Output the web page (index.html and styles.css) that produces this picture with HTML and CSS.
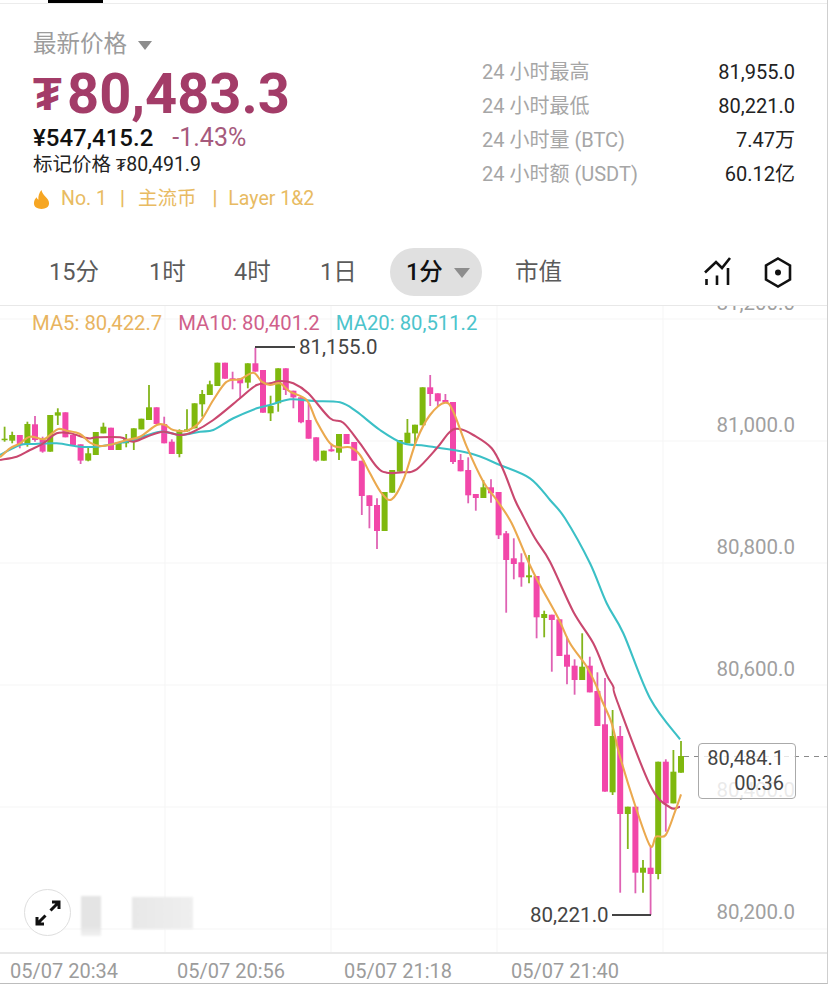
FILE: index.html
```html
<!DOCTYPE html>
<html lang="zh-CN">
<head>
<meta charset="utf-8">
<title>BTC 行情</title>
<link rel="stylesheet" href="styles.css">
</head>
<body>
<main class="page">
  <div class="topbar"><span class="topbar-active"></span></div>
  <section class="summary">
    <div class="quote">
      <div class="quote-title">最新价格<span class="caret caret-title"></span></div>
      <div class="price"><span class="price-sym">₮</span>80,483.3</div>
      <div class="sub"><span class="sub-cny">¥547,415.2</span><span class="sub-change">-1.43%</span></div>
      <div class="mark">标记价格 <span class="mark-sym">₮</span>80,491.9</div>
      <div class="tags">
        <svg class="flame" viewBox="0 0 18 22" width="17" height="21"><path d="M9 1c.6 3.2 2 4.600 4 6.800 2 2.100 4 4.200 4 7.200 0 3.900-3.400 6-8 6s-8-2.100-8-6c0-2.700 1.300-4.600 2.800-6.300.4 1.200 1 2 1.900 2.500C5.300 7.600 6.600 3.600 9 1z"/></svg>
        <span class="tag-first">No. 1</span><span class="tag-sep">|</span><span>主流币</span><span class="tag-sep tag-sep-wide">|</span><span>Layer 1&amp;2</span>
      </div>
    </div>
    <dl class="stats">
      <div class="stat"><dt>24 小时最高</dt><dd>81,955.0</dd></div>
      <div class="stat"><dt>24 小时最低</dt><dd>80,221.0</dd></div>
      <div class="stat"><dt>24 小时量 (BTC)</dt><dd>7.47万</dd></div>
      <div class="stat"><dt>24 小时额 (USDT)</dt><dd>60.12亿</dd></div>
    </dl>
  </section>
  <nav class="tabs">
    <span class="tab tab-15">15分</span>
    <span class="tab tab-1h">1时</span>
    <span class="tab tab-4h">4时</span>
    <span class="tab tab-1d">1日</span>
    <span class="tab-pill">1分<span class="caret caret-pill"></span></span>
    <span class="tab tab-cap">市值</span>
    <span class="tab-icons">
      <svg class="icon" viewBox="0 0 30 30" width="30" height="30"><path d="M2 15.500 13 5l6 6 8-10M3.500 22v6M14 18.500V28M25 11v17"/></svg>
      <svg class="icon" viewBox="0 0 30 32" width="30" height="32"><path d="M15 2.500l12 7v14l-12 7-12-7v-14z"/><circle class="icon-dot" cx="15" cy="16.500" r="3"/></svg>
    </span>
  </nav>
  <section class="chart">
    <svg id="plot" class="plot" viewBox="0 306 828 646" width="828" height="646">
      <g class="grid">
        <path d="M0 319H828M0 441H828M0 563H828M0 685H828M0 807H828M0 929H828"/>
        <path d="M165 306V952M331 306V952M497 306V952M663 306V952"/>
      </g>
      <g class="axis-labels">
        <text x="795" y="310">81,200.0</text>
        <text x="795" y="432">81,000.0</text>
        <text x="795" y="554">80,800.0</text>
        <text x="795" y="676">80,600.0</text>
        <text x="795" y="797">80,400.0</text>
        <text x="795" y="919">80,200.0</text>
      </g>
      <g id="candles"></g>
      <g id="averages"></g>
      <path class="marker-line" d="M255 347H295M612 915H651"/>
      <text class="marker-text" x="299" y="354">81,155.0</text>
      <text class="marker-text" x="530" y="922">80,221.0</text>
      <path class="last-line" d="M684 756.500H828"/>
    </svg>
    <div class="legend">
      <span class="ma5">MA5: 80,422.7</span>
      <span class="ma10">MA10: 80,401.2</span>
      <span class="ma20">MA20: 80,511.2</span>
    </div>
    <div class="last-box"><span>80,484.1</span><span>00:36</span></div>
    <div class="expand">
      <svg viewBox="0 0 28 28" width="28" height="28"><path d="M16.500 11.500L25 3M18 3h7v7M11.500 16.500L3 25M3 18v7h7"/></svg>
    </div>
    <div class="smudge smudge-a"></div>
    <div class="smudge smudge-b"></div>
  </section>
  <footer class="times">
    <span>05/07 20:34</span><span>05/07 20:56</span><span>05/07 21:18</span><span>05/07 21:40</span>
  </footer>
</main>
<script src="chart.js"></script>
</body>
</html>
```
FILE: styles.css
```css
* { box-sizing: border-box; margin: 0; padding: 0; }
html, body { background: #fff; }
body {
  font-family: Roboto, "Noto Sans CJK SC", sans-serif;
  color: #222;
}
.page {
  width: 828px;
  height: 984px;
  display: flex;
  flex-direction: column;
  overflow: hidden;
  border-right: 1px solid #cfcfcf;
  border-bottom: 1px solid #bdbdbd;
}
.topbar {
  height: 4px;
  flex: none;
  border-bottom: 1px solid #ececec;
  padding-left: 48px;
}
.topbar-active { display: block; width: 55px; height: 3px; background: #000; }

.summary {
  flex: none;
  height: 236px;
  padding: 24px 32px 0 33px;
  display: flex;
  justify-content: space-between;
}
.quote { width: 330px; }
.quote-title {
  font-size: 23.500px;
  line-height: 32px;
  color: #9c9c9c;
  display: flex;
  align-items: center;
}
.caret {
  display: block;
  width: 0;
  height: 0;
  border-left: 7px solid transparent;
  border-right: 7px solid transparent;
  border-top: 9px solid #8d8d8d;
}
.caret-title { margin-left: 11px; margin-top: 2px; }
.price {
  font-size: 56px;
  font-weight: 700;
  line-height: 58px;
  margin-top: 5px;
  color: #a33c68;
  display: flex;
  align-items: center;
}
.price-sym { font-size: 47px; width: 34px; }
.sub {
  display: flex;
  align-items: baseline;
  line-height: 29px;
}
.sub-cny { font-size: 24px; font-weight: 500; color: #111; }
.sub-change { font-size: 25px; margin-left: 19px; color: #a65a7c; }
.mark { font-size: 19.500px; line-height: 24px; color: #222; }
.mark-sym { font-size: 17px; }
.tags {
  margin-top: 9px;
  display: flex;
  align-items: center;
  font-size: 19.500px;
  line-height: 26px;
  color: #e8bb62;
}
.flame { fill: #f6a623; flex: none; margin-right: 11px; }
.tag-sep { margin: 0 13px; font-weight: 700; }
.tag-sep-wide { margin: 0 11px 0 16px; }

.stats { width: 313px; padding-top: 27px; }
.stat {
  display: flex;
  justify-content: space-between;
  font-size: 20px;
  line-height: 34px;
}
.stat dt { color: #a6a6a6; }
.stat dd { color: #222; }

.tabs {
  flex: none;
  height: 66px;
  border-bottom: 1px solid #e8e8e8;
  display: flex;
  align-items: flex-start;
  padding: 8px 34px 0 49px;
  font-size: 23.500px;
  line-height: 48px;
  color: #5b5b5b;
}
.tab { display: block; }
.tab-15 { width: 100px; }
.tab-1h { width: 85px; }
.tab-4h { width: 86px; }
.tab-1d { width: 70px; }
.tab-pill {
  width: 92px;
  height: 48px;
  padding-left: 16px;
  border-radius: 24px;
  background: #e0e0e0;
  color: #111;
  font-weight: 500;
  display: flex;
  align-items: center;
}
.caret-pill { margin-left: 11px; margin-top: 1px; border-left-width: 8px; border-right-width: 8px; border-top-width: 10px; }
.tab-cap { margin-left: 33px; }
.tab-icons {
  margin-left: auto;
  display: flex;
  gap: 30px;
  align-items: center;
  height: 48px;
}
.icon { fill: none; stroke: #111; stroke-width: 2.600; }
.icon-dot { fill: #111; stroke: none; }

.chart { flex: 1; position: relative; overflow: hidden; }
.plot { display: block; }
.grid path { fill: none; stroke: #f5f5f5; stroke-width: 1; }
.axis-labels text { font-size: 20.500px; fill: #a0a0a0; text-anchor: end; }
.marker-line { fill: none; stroke: #444; stroke-width: 1.800; }
.marker-text { font-size: 20.500px; fill: #444; }
.last-line { fill: none; stroke: #8a8a8a; stroke-width: 1; stroke-dasharray: 5 5; }

.legend {
  position: absolute;
  left: 32px;
  top: 6px;
  display: flex;
  gap: 16px;
  font-size: 20.300px;
  line-height: 22px;
}
.ma5 { color: #e8b45f; }
.ma10 { color: #d0608a; }
.ma20 { color: #4cc4cc; }

.last-box {
  position: absolute;
  left: 698px;
  top: 437px;
  width: 98px;
  height: 56px;
  border: 1px solid #aaa;
  border-radius: 4px;
  background: rgba(255, 255, 255, 0.78);
  padding: 0 11px 0 0;
  display: flex;
  flex-direction: column;
  align-items: flex-end;
  justify-content: center;
  font-size: 20px;
  line-height: 25px;
  color: #444;
}
.expand {
  position: absolute;
  left: 24px;
  top: 583px;
  width: 47px;
  height: 47px;
  border-radius: 50%;
  border: 1.500px solid #dedede;
  background: #fff;
  display: flex;
  align-items: center;
  justify-content: center;
}
.expand svg { fill: none; stroke: #111; stroke-width: 3; }
.smudge { position: absolute; filter: blur(1px); }
.smudge-a { left: 81px; top: 590px; width: 20px; height: 40px; background: linear-gradient(#e4e4e4 75%, #f2f2f2); }
.smudge-b { left: 132px; top: 591px; width: 61px; height: 32px; background: linear-gradient(90deg, #e8e8e8, #efefef); }

.times {
  flex: none;
  height: 31px;
  border-top: 2px solid #e8e8e8;
  display: grid;
  grid-template-columns: repeat(4, 167px);
  padding-left: 10px;
  font-size: 20px;
  line-height: 34px;
  color: #9c9c9c;
}
```
FILE: chart.js
```js
// Candles: [colour, body top, body bottom, wick top, wick bottom], read at 3x scale from y origin.
const candleSets = [
  { first: -1, y0: 300, rows: [
    ['g',430,452,430,455],['g',416,420,380,425],['g',405,422,395,430],['p',405,435,405,445],['g',372,435,365,440],
    ['p',373,420,348,425],['p',418,455,410,458],['g',345,455,345,455],['g',337,347,325,375],['p',337,412,337,412],
    ['p',405,435,405,435],['p',433,482,433,492],['g',460,482,440,484],['g',396,465,396,465],['g',380,400,368,400],
    ['p',383,450,383,450],['g',428,450,428,450],['g',417,430,402,442],['g',385,420,385,450],['g',356,388,356,388],
    ['g',322,360,255,360],['p',322,372,322,372],['p',372,430,350,430],['p',425,462,418,462],['g',390,462,388,472],
    ['g',388,394,328,395],['g',310,385,310,385],['g',282,313,270,350],['g',253,285,242,285],['g',188,258,188,258],
    ['p',188,236,188,236],['p',235,240,215,268],['p',235,250,235,295],['g',190,248,190,265],['p',190,215,143,215],
    ['p',210,338,210,338]
  ]},
  { first: 35, y0: 300, rows: [['g',318,340,287,363]] },
  { first: 36, y0: 340, rows: [
    ['g',85,190,85,215],['p',85,150,85,165],['p',152,172,152,205],['p',172,247,172,250],['p',240,296,190,296],
    ['p',292,362,292,365],['g',332,362,332,362],['p',328,334,315,335],['g',282,338,282,360],['p',282,312,282,312],
    ['p',306,362,306,362],['p',362,468,362,525],['p',466,498,466,565],['p',495,573,475,627],['g',456,573,456,573],
    ['g',390,458,390,458],['g',300,395,300,395],['g',278,310,237,310],['g',254,280,254,312],['g',142,256,142,256],
    ['p',142,162,105,198],['p',160,184,160,198],['p',180,188,162,188],['p',186,366,186,372],['p',360,394,342,394],
    ['p',390,466,352,490],['p',462,474,462,512],['g',442,474,420,474],['p',442,460,418,488],['p',456,586,456,597]
  ]},
  { first: 66, y0: 500, rows: [
    ['p',100,180,93,338],['p',175,192,115,238],['p',187,232,160,260],['g',226,232,165,250],['p',228,352,228,415],
    ['g',342,354,332,412],['p',344,360,344,515],['p',358,468,358,468],['p',464,500,410,553],['p',497,540,478,584],
    ['g',500,540,400,540],['p',497,577,470,577],['p',573,678,517,678]
  ]},
  { first: 79, y0: 700, rows: [
    ['p',73,275,-66,275],['g',108,277,30,285],['p',108,342,78,578],['g',320,342,320,447],['p',320,518,320,580],
    ['g',503,518,480,578],['p',503,522,440,645],['g',185,522,185,538],['p',185,310,178,395],['g',215,310,150,310],
    ['g',168,218,123,218]
  ]}
];

// Moving averages: [x origin, y origin, points read at 3x scale].
const averages = {
  ma5: [
    [0,300,[[0,472],[30,445],[60,430],[90,410],[130,418],[150,405],[175,387],[200,392],[240,402],[270,428],[300,438],[340,432],[380,420],[420,410],[470,375],[495,375],[520,390],[560,392],[600,365],[640,300],[680,245],[720,238],[760,218],[785,245]]],
    [270,340,[[0,135],[30,130],[60,155],[110,180],[140,245],[180,310],[210,322],[240,322],[270,345],[300,400],[335,460],[365,478],[400,420],[440,300],[480,225],[525,188],[550,215],[590,320],[640,425]]],
    [490,500,[[20,0],[65,70],[117,190],[150,255],[205,355],[240,430],[290,500],[320,560]]],
    [570,700,[[95,0],[125,70],[150,170],[195,315],[240,437],[258,410],[287,405],[315,335],[333,283]]]
  ],
  ma10: [
    [0,300,[[0,480],[50,470],[90,450],[130,430],[170,400],[210,400],[265,415],[290,412],[360,412],[400,425],[440,410],[490,395],[540,405],[580,395],[640,360],[720,295],[770,255]]],
    [270,340,[[0,130],[30,123],[70,130],[115,160],[180,235],[220,248],[270,310],[320,380],[350,398],[400,397],[440,388],[500,325],[540,275],[570,267],[610,285],[665,325],[700,390]]],
    [490,500,[[75,0],[95,40],[135,115],[180,185],[250,335],[310,430],[350,525],[370,560]]],
    [570,700,[[140,0],[240,255],[300,322],[330,320]]]
  ],
  ma20: [
    [0,300,[[0,465],[60,435],[100,432],[170,430],[240,440],[290,440],[340,432],[400,420],[480,395],[540,405],[600,395],[640,390],[700,355],[770,325]]],
    [270,340,[[0,195],[60,178],[130,183],[210,187],[260,215],[330,270],[400,310],[470,318],[600,340],[690,375],[780,415]]],
    [490,500,[[180,0],[225,55],[300,190],[350,310],[400,400],[480,595]]],
    [570,700,[[330,118]]]
  ]
};

const NS = 'http://www.w3.org/2000/svg';
const COLORS = {
  p: { body: '#f247a9', wick: '#df62b3' },
  g: { body: '#7fb80e', wick: '#83b51c' }
};
const add = (parent, name, attrs) => {
  const el = document.createElementNS(NS, name);
  Object.entries(attrs).forEach(([k, v]) => el.setAttribute(k, v));
  parent.appendChild(el);
};
const candles = document.getElementById('candles');
candleSets.forEach(({ first, y0, rows }) => {
  rows.forEach(([c, top, bottom, wickTop, wickBottom], n) => {
    const x = 4.6 + 7.6 * (first + n);
    const Y = v => (y0 + v / 3).toFixed(1);
    add(candles, 'line', { x1: x, x2: x, y1: Y(wickTop), y2: Y(wickBottom), stroke: COLORS[c].wick, 'stroke-width': 1.8 });
    add(candles, 'rect', { x: x - 3, y: Y(top), width: 6, height: Math.max((bottom - top) / 3, 1.5).toFixed(1), fill: COLORS[c].body });
  });
});

// Catmull-Rom curve through the points, so the averages read as smooth lines.
const smooth = pts => pts.slice(0, -1).reduce((d, p, i) => {
  const a = pts[i - 1] || p, b = pts[i + 1], c = pts[i + 2] || b;
  const c1 = [p[0] + (b[0] - a[0]) / 6, p[1] + (b[1] - a[1]) / 6];
  const c2 = [b[0] - (c[0] - p[0]) / 6, b[1] - (c[1] - p[1]) / 6];
  return d + `C${c1.map(v => v.toFixed(1))} ${c2.map(v => v.toFixed(1))} ${b.map(v => v.toFixed(1))}`;
}, `M${pts[0].map(v => v.toFixed(1))}`);

const lineColors = { ma5: '#eba94e', ma10: '#c9486f', ma20: '#3bc0c6' };
const group = document.getElementById('averages');
['ma20', 'ma10', 'ma5'].forEach(name => {
  const pts = averages[name].flatMap(([x0, y0, list]) => list.map(([x, y]) => [x0 + x / 3, y0 + y / 3]));
  add(group, 'path', { d: smooth(pts), fill: 'none', stroke: lineColors[name], 'stroke-width': 2.1, 'stroke-linejoin': 'round' });
});
```
